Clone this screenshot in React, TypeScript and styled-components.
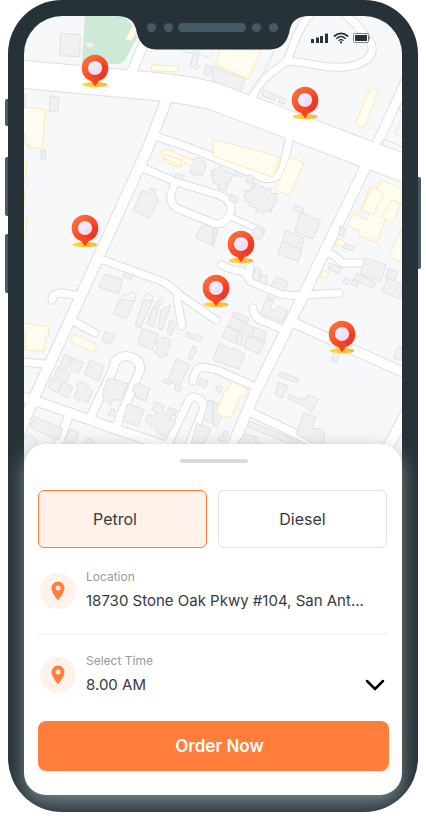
import React, { useState } from 'react';
import styled, { createGlobalStyle } from 'styled-components';

const GlobalStyle = createGlobalStyle`
  * { box-sizing: border-box; }
  body { margin: 0; background: #fff; font-family: Inter, "Liberation Sans", sans-serif; color: #383a3c; }
  button, input, select { font: inherit; color: inherit; }
`;

const Page = styled.main`
  position: relative;
  padding: 0 8px 10px;
  max-width: 480px;
  margin: 0 auto;
`;

const SideKey = styled.span<{ $side: 'left' | 'right'; $top: number; $length: number }>`
  position: absolute;
  ${p => p.$side}: 5px;
  top: ${p => p.$top}px;
  width: 6px;
  height: ${p => p.$length}px;
  border-radius: 2px;
  background: #455a64;
`;

const Phone = styled.div`
  position: relative;
  padding: 16px 16px 17px;
  background: #263238;
  border-radius: 54px;
  overflow: hidden;
`;

const Screen = styled.div`
  display: flex;
  flex-direction: column;
`;

const MapArea = styled.section`
  position: relative;
  height: 464px;
  overflow: hidden;
  border-radius: 38px 38px 0 0;
  background: #f7f8fa;
`;

const MapDrawing = styled.svg`
  display: block;
  width: 100%;
  height: 100%;
`;

const Notch = styled.svg`
  position: absolute;
  top: 0;
  left: 50%;
  transform: translateX(-50%);
`;

const StatusBar = styled.div`
  position: absolute;
  top: 16px;
  right: 31px;
  display: flex;
  align-items: center;
  gap: 4px;
`;

const Sheet = styled.section`
  position: relative;
  display: flex;
  flex-direction: column;
  margin-top: -36px;
  padding: 15px 13px 24px 14px;
  background: #fff;
  border-radius: 22px;
  box-shadow: 0 8px 20px rgba(134, 148, 152, 0.85);
`;

const Handle = styled.div`
  align-self: center;
  width: 68px;
  height: 4px;
  border-radius: 2px;
  background: #dadbe0;
`;

const FuelChoices = styled.div`
  display: grid;
  grid-template-columns: 1fr 1fr;
  gap: 11px;
  margin: 27px 2px 0 0;
`;

const FuelButton = styled.button<{ $active: boolean }>`
  height: 58px;
  padding: 0 ${p => (p.$active ? 15 : 0)}px 0 0;
  border: 1px solid ${p => (p.$active ? '#ff7e3c' : '#e0e1e2')};
  border-radius: 6px;
  background: ${p => (p.$active ? '#fff2eb' : '#fff')};
  font-size: 16px;
  cursor: pointer;
`;

const Row = styled.div<{ $last?: boolean }>`
  display: flex;
  align-items: center;
  gap: 10px;
  height: ${p => (p.$last ? 86 : 85)}px;
  padding: 0 0 ${p => (p.$last ? 7 : 0)}px 2px;
`;

const Badge = styled.span`
  display: grid;
  place-items: center;
  flex: none;
  width: 36px;
  height: 36px;
  border-radius: 50%;
  background: #fff2eb;
`;

const Field = styled.div`
  display: flex;
  flex: 1;
  flex-direction: column;
  gap: 4px;
  min-width: 0;
`;

const FieldLabel = styled.label`
  font-size: 12px;
  line-height: 16px;
  color: #999;
`;

const TextValue = styled.input`
  width: 100%;
  height: 24px;
  padding: 0;
  border: 0;
  background: transparent;
  font-size: 15px;
  text-overflow: ellipsis;
`;

const SelectWrap = styled.div`
  display: grid;
  align-items: center;
  grid-template-columns: 1fr 20px;
  padding-right: 4px;
`;

const SelectValue = styled.select`
  grid-area: 1 / 1 / 2 / 3;
  height: 24px;
  padding: 0;
  border: 0;
  background: transparent;
  appearance: none;
  font-size: 15px;
`;

const Chevron = styled.svg`
  grid-area: 1 / 2;
  pointer-events: none;
`;

const Divider = styled.hr`
  width: 100%;
  height: 2px;
  margin: 0;
  border: 0;
  background: #f6f6f6;
`;

const OrderButton = styled.button`
  height: 50px;
  padding: 0 0 0 12px;
  border: 0;
  border-radius: 8px;
  background: #ff7e3c;
  color: #fff;
  font-size: 17px;
  font-weight: 600;
  cursor: pointer;
`;

type Road = { d: string; w: number };

const roads: Road[] = [
  { w: 27, d: 'M10 73L24 74.5L150 86Q185 89 213 96L285 123L366 154L410 170' },
  { w: 10, d: 'M168 96L147 150L79 300L35 396L18 436' },
  { w: 10, d: 'M366 166L305 292L254 395L230 452' },
  { w: 9, d: 'M412 68L376 146' },
  { w: 9, d: 'M131 74L145 40L154 18' },
  { w: 7, d: 'M312 12Q300 26 295 41L287 61Q300 62 316 65Q336 69 352 66Q368 62 372 52Q373 46 369 40L356 24L340 10' },
  { w: 7, d: 'M287 61L270 74Q258 83 252 98' },
  { w: 7, d: 'M290 136L283 168Q278 181 263 178L213 157L190 148L158 137' },
  { w: 7, d: 'M143 168L176 182L216 194Q232 199 231 211Q226 227 213 223L181 210Q167 205 172 191L175 183' },
  { w: 5, d: 'M231 217L262 231' },
  { w: 7, d: 'M103 260L161 281Q168 284 180 295L216 320' },
  { w: 7, d: 'M177 298L182 326' },
  { w: 7, d: 'M222 265Q230 270 241 271Q248 274 250 281L270 290Q284 297 304 295L339 293' },
  { w: 7, d: 'M248 278L250 267' },
  { w: 7, d: 'M329 253Q334 255 339 260Q341 264 348 263L360 263' },
  { w: 9, d: 'M290 321L407 374' },
  { w: 10, d: 'M412 402L384 455' },
  { w: 7, d: 'M193 381Q195 368 202 367L217 370L256 387' },
  { w: 8, d: 'M250 412L325 448' },
  { w: 9, d: 'M20 396L45 404L118 430L175 449' },
  { w: 8, d: 'M90 418L113 370Q114 357 126 356Q141 358 140 370L116 427' },
  { w: 7, d: 'M75 322L95 333' },
  { w: 7, d: 'M20 362L45 364' },
  { w: 8, d: 'M68 418L56 450' },
  { w: 7, d: 'M170 440L188 402Q190 395 197 398Q205 402 203 410L189 445' },
  { w: 7, d: 'M52 300Q52 293 62 293L80 296' },
  { w: 7, d: 'M253 308Q254 320 268 323L284 330' },
];

type Tile = { x: number; y: number; gray: string; yellow: string };

// Each block is drawn on a grid three times finer than the map itself.
const blocks: Tile[] = [
  {
    x: 0, y: 0,
    gray: 'M181 101L241 104L239 170L180 167ZM150 288L177 290L173 337L148 334ZM70 282L76 284L75 318L70 320ZM580 164L597 160L590 190L598 198L590 209L570 198ZM620 195L639 203L630 228L611 221ZM545 150Q570 165 590 155L608 148M600 160Q625 180 639 160',
    yellow: 'M456 194L536 198L533 216L453 212ZM398 77L409 85L408 100L394 122L376 118ZM70 322L136 328L127 446L86 443L88 433L75 432L78 404L70 404Z',
  },
  {
    x: 213, y: 0,
    gray: 'M150 269L194 288L185 302L146 286ZM200 290L221 298L215 312L198 306ZM0 200L97 237L83 275L0 243ZM185 148L145 235L108 284M567 307L556 325L567 334M500 436L512 417L567 440',
    yellow: 'M22 147L145 150L105 238L8 195ZM472 262L498 271L453 384L426 374ZM567 350L546 402L567 410',
  },
  {
    x: 0, y: 150,
    gray: 'M124 0L137 1L136 27L123 27ZM425 121L446 130L453 114L468 118L464 133L477 150L446 205L400 180L412 153ZM527 71L551 77L547 91L523 84ZM315 372L367 389L356 432L296 411ZM373 367L399 375L394 389L369 380ZM591 22L614 36L618 47L608 76L590 70L588 78L571 70L578 32ZM604 230L620 225L639 238V286L586 264ZM365 450L373 431L387 437L393 425L410 432L402 450M430 450L440 429L461 438L456 450M478 440L495 447M637 60L630 85',
    yellow: 'M70 37L80 39L76 96L70 96ZM70 113L76 115L70 182ZM70 199L80 201L77 260L70 260ZM487 0L519 1L522 9L580 29L578 45L568 46L553 38L541 54L491 34L494 20L484 13ZM492 12L546 31M488 24L544 47M548 20L540 48',
  },
  {
    x: 213, y: 150,
    gray: 'M0 61L24 48L35 62L61 72L46 104L36 100L43 111L38 123L16 116L18 105L0 98ZM67 63L92 73L88 82L63 75ZM106 73L125 82L117 104L98 94ZM55 133L78 144L70 159L47 149ZM123 98L133 102L139 113L150 107L157 120L172 112L175 131L194 130L188 143L198 151L180 163L184 174L172 174L177 187L159 182L151 194L144 183L128 188L130 173L109 169L114 159L94 153L101 145L90 135L99 131L93 121L111 124L116 109L123 115ZM247 165L274 177L268 190L240 178ZM261 187L323 211L299 267L246 245ZM218 240L273 264L264 303L208 275ZM209 275L268 300L255 335L193 311ZM381 227L399 235L390 261L377 252ZM396 280L425 291L417 302L391 293ZM350 339L387 354L379 371L345 357ZM457 323L519 345L503 394L441 372ZM528 354L553 364L543 396L518 386ZM526 384L567 402V448L506 425ZM432 370L489 397L481 414L421 390ZM397 383L412 389L404 405L389 399ZM420 388L438 398L431 411L414 403ZM190 380L225 396L212 425L174 408ZM127 352L144 360L136 396L118 386ZM145 372L164 379L157 404L137 396ZM170 430L190 440L180 450L160 445ZM120 240L130 232L153 242L140 272L118 258ZM0 235L15 240L0 290Z',
    yellow: 'M0 -32L200 20L180 82L0 18ZM230 20L273 39L229 138L187 119ZM504 90L567 116V163L536 150L517 208L491 279L437 256L442 244L403 226L420 191L461 209L470 190L443 180L471 111L492 115ZM480 109L512 130L481 194L443 180ZM537 149L562 163L540 218L505 202ZM567 234L527 320L567 338ZM378 266L397 277L389 291L367 282ZM330 360L350 371L340 386L323 378Z',
  },
  {
    x: 0, y: 300,
    gray: 'M357 0L405 2L378 56L340 42ZM430 0L459 2L420 84L405 77ZM474 0L488 3L450 60L445 52ZM459 22L474 30L461 80L442 73ZM484 29L512 15L486 90L474 83ZM510 61L530 72L513 106L502 97ZM315 93L345 104L331 134L307 122ZM427 85L475 102L457 149L414 132ZM489 111L508 118L511 143L498 151L500 168L481 172L463 157L472 143L468 126ZM563 97L582 107L592 101L606 110L600 125L557 109ZM580 137L592 145L574 181L565 176ZM530 176L568 195L540 259L502 242ZM493 236L515 247L510 256L487 245ZM529 251L546 263L538 278L522 268ZM602 234L624 243L615 263L597 253ZM195 162L215 172L200 207L180 196ZM218 174L251 188L233 221L210 207ZM172 200L210 217L200 245L163 229ZM156 233L187 250L172 278L144 263ZM187 245L219 261L204 294L178 281ZM270 181L312 199L296 244L253 222ZM241 244L265 255L264 265L278 272L264 307L239 295L235 305L222 290L233 266L230 258ZM324 233L365 245L368 251L383 249L368 290L370 300L336 300L332 315L316 302L307 286L312 264ZM414 250L450 265L437 303L407 292L408 280L396 275L403 255ZM383 311L431 328L414 379L368 362ZM334 325L346 331L338 350L325 344ZM466 306L493 318L489 339L499 344L507 322L530 330L524 349L515 340L510 358L528 365L515 390L498 397L495 409L475 401L468 384L449 378L452 370L435 365L445 345L463 349L468 336L456 330ZM103 350L188 385L176 420L90 382ZM89 404L111 417L107 430L123 440L110 468L70 468V416ZM211 386L236 400L223 430L190 430ZM263 415L285 425L280 440L248 438ZM590 370L633 386L615 430L574 430ZM626 300L639 304V370L610 355Z',
    yellow: 'M70 69L146 80L144 110L137 108L132 154L74 150L76 94L70 92ZM221 102L291 135L280 157L210 124Z',
  },
  {
    x: 213, y: 300,
    gray: 'M158 0L181 4L170 26L187 32L193 18L224 31L208 68L143 42ZM61 34L109 54L102 69L56 48ZM59 50L91 67L78 94L43 78ZM95 72L126 84L118 111L84 98ZM123 82L161 97L155 121L118 108ZM42 79L77 96L67 130L27 111ZM76 102L92 108L84 137L68 129ZM103 108L155 126L139 163L92 142ZM19 128L52 147L65 145L96 162L78 207L0 181ZM201 215L257 237L253 249L197 228ZM196 247L224 257L208 294L186 283ZM230 284L255 296L276 298L286 283L316 297L295 337L288 325L223 294ZM272 338L308 351L295 387L321 386L335 401L329 430L293 428L250 403ZM107 363L225 410L262 430H223L104 379ZM97 402L133 412L126 424L150 432L70 432ZM365 151L380 160L370 188L355 181ZM555 140L567 143V183L541 174ZM14 256L29 262L22 279L7 270ZM0 303L38 321L11 380L0 376ZM34 393L44 396L36 425L15 421L17 411L28 409Z',
    yellow: 'M57 244L103 266L95 289L83 287L53 355L37 347L34 353L8 339L35 273L43 271Z',
  },
];

const pins: [number, number][] = [
  [95, 68],
  [305, 100],
  [85, 228],
  [241, 244],
  [216, 288],
  [342, 334],
];

function MapPin({ x, y }: { x: number; y: number }) {
  return (
    <g transform={`translate(${x} ${y})`}>
      <ellipse cy="16.7" rx="12.3" ry="2.6" fill="url(#pinGround)" />
      <path d="M0 18.3L-3.6 13.2C-9.6 11.4-13.3 6.3-13.3 0A13.3 13.3 0 0 1 13.3 0C13.3 6.3 9.6 11.4 3.6 13.2Z" fill="url(#pinBody)" />
      <path d="M5.5-6.5L13 0C13 5 10.5 9 7 11L-4 7Q6 8 8 0Q8-4 5.5-6.5Z" fill="#d92f1c" opacity=".4" />
      <circle r="7.1" fill="url(#pinEye)" />
    </g>
  );
}

function CityMap() {
  return (
    <MapDrawing viewBox="24 16 378 464" preserveAspectRatio="xMidYMin slice" role="img" aria-label="Map of nearby fuel stations">
      <defs>
        <linearGradient id="pinBody" x1="0" y1="0" x2=".8" y2="1">
          <stop stopColor="#ff7a3d" />
          <stop offset=".6" stopColor="#fb4827" />
          <stop offset="1" stopColor="#ff3520" />
        </linearGradient>
        <linearGradient id="pinGround">
          <stop stopColor="#ffdb3a" />
          <stop offset="1" stopColor="#fdb23b" />
        </linearGradient>
        <linearGradient id="pinEye" x1="0" y1="0" x2="1" y2="1">
          <stop stopColor="#f7f4ff" />
          <stop offset="1" stopColor="#e8d5f5" />
        </linearGradient>
      </defs>
      <path d="M85 14H115Q132 16 137 38L125 60Q122 64 117 64L82 63Z" fill="#cfe9d8" />
      <g fill="none" stroke="#dcdee1" strokeLinejoin="round" strokeLinecap="round">
        {roads.map(r => <path key={r.d} d={r.d} strokeWidth={r.w + 2} />)}
      </g>
      <g fill="none" stroke="#fff" strokeLinejoin="round" strokeLinecap="round">
        {roads.map(r => <path key={r.d} d={r.d} strokeWidth={r.w} />)}
      </g>
      {blocks.map(b => (
        <g key={`${b.x}-${b.y}`} transform={`translate(${b.x} ${b.y}) scale(.3333)`} strokeWidth="3" strokeLinejoin="round">
          <Shapes d={b.gray} fill="#f0f1f3" stroke="#dfe0e3" />
          <Shapes d={b.yellow} fill="#fffcf0" stroke="#ffe6b0" />
        </g>
      ))}
      <path d="M86 42L94 42.5L93.5 48L85.5 47Z" fill="#f0f1f3" stroke="#dcdde0" />
      {pins.map(([x, y]) => <MapPin key={`${x}-${y}`} x={x} y={y} />)}
    </MapDrawing>
  );
}

// Closed outlines are filled; open ones are drawn as plain lines.
function Shapes({ d, fill, stroke }: { d: string; fill: string; stroke: string }) {
  return (
    <>
      {d.split(/(?=M)/).map(part => (
        <path key={part} d={part} fill={part.endsWith('Z') ? fill : 'none'} stroke={stroke} />
      ))}
    </>
  );
}

function PlaceIcon() {
  return (
    <svg width="14" height="20" viewBox="0 0 14 20" aria-hidden="true">
      <path fillRule="evenodd" fill="#ff7e3c" d="M7 .5A6.5 6.5 0 0 0 .5 7C.5 11.8 7 19.3 7 19.3S13.5 11.8 13.5 7A6.5 6.5 0 0 0 7 .5ZM7 4.6A2.5 2.5 0 1 1 7 9.6A2.5 2.5 0 0 1 7 4.6Z" />
    </svg>
  );
}

export default function App() {
  const [fuel, setFuel] = useState('Petrol');
  return (
    <>
      <GlobalStyle />
      <Page>
        <SideKey $side="left" $top={99} $length={27} />
        <SideKey $side="left" $top={157} $length={59} />
        <SideKey $side="left" $top={234} $length={59} />
        <SideKey $side="right" $top={177} $length={92} />
        <Phone>
          <Screen>
            <MapArea>
              <CityMap />
              <Notch width="192" height="34" viewBox="0 0 192 34" aria-hidden="true">
                <path d="M0 0C11 0 17 5 19 13C21 25 27 33.5 39 33.5H153C165 33.5 171 25 173 13C175 5 181 0 192 0Z" fill="#263238" />
                <g fill="#455a64">
                  <circle cx="34.5" cy="11.5" r="4.6" />
                  <circle cx="51.5" cy="11.5" r="4.6" />
                  <rect x="61" y="7" width="68" height="9" rx="4.5" />
                  <circle cx="139.5" cy="11.5" r="4.6" />
                  <circle cx="156.5" cy="11.5" r="4.6" />
                </g>
              </Notch>
              <StatusBar>
                <svg width="18" height="12" viewBox="0 0 18 12" fill="#263238" aria-hidden="true">
                  <rect x="0" y="7" width="3" height="4" rx=".5" />
                  <rect x="5" y="5.5" width="3" height="5.5" rx=".5" />
                  <rect x="9" y="4" width="3" height="7" rx=".5" />
                  <rect x="14" y="1.5" width="3" height="9.5" rx=".5" />
                </svg>
                <svg width="16" height="12" viewBox="0 0 16 12" fill="none" stroke="#263238" aria-hidden="true">
                  <path d="M.8 4.5Q8-1.8 15.2 4.5" strokeWidth="1.7" />
                  <path d="M3.3 6.7Q8 2.3 12.7 6.7" strokeWidth="1.5" />
                  <path d="M5.5 8.8Q8 6.5 10.5 8.8" strokeWidth="1.3" />
                  <circle cx="8" cy="10.4" r="1.1" fill="#263238" stroke="none" />
                </svg>
                <svg width="18" height="12" viewBox="0 0 18 12" aria-hidden="true">
                  <rect x=".5" y="1.5" width="15" height="9" rx="1" fill="#fff" stroke="#7d8488" />
                  <rect x="2" y="3" width="12" height="6" fill="#263238" />
                  <path d="M16.5 4.5V7.5" stroke="#7d8488" />
                </svg>
              </StatusBar>
            </MapArea>
            <Sheet>
              <Handle />
              <FuelChoices>
                {['Petrol', 'Diesel'].map(name => (
                  <FuelButton key={name} type="button" $active={fuel === name} aria-pressed={fuel === name} onClick={() => setFuel(name)}>
                    {name}
                  </FuelButton>
                ))}
              </FuelChoices>
              <Row>
                <Badge><PlaceIcon /></Badge>
                <Field>
                  <FieldLabel htmlFor="location">Location</FieldLabel>
                  <TextValue id="location" defaultValue="18730 Stone Oak Pkwy #104, San Ant..." />
                </Field>
              </Row>
              <Divider />
              <Row $last>
                <Badge><PlaceIcon /></Badge>
                <Field>
                  <FieldLabel htmlFor="time">Select Time</FieldLabel>
                  <SelectWrap>
                    <SelectValue id="time" defaultValue="8.00 AM">
                      <option>8.00 AM</option>
                      <option>9.00 AM</option>
                      <option>10.00 AM</option>
                    </SelectValue>
                    <Chevron width="20" height="12" viewBox="0 0 20 12" fill="none" stroke="#000" strokeWidth="2.5" strokeLinecap="round" aria-hidden="true">
                      <path d="M2 2L10 10L18 2" />
                    </Chevron>
                  </SelectWrap>
                </Field>
              </Row>
              <OrderButton type="button">Order Now</OrderButton>
            </Sheet>
          </Screen>
        </Phone>
      </Page>
    </>
  );
}
